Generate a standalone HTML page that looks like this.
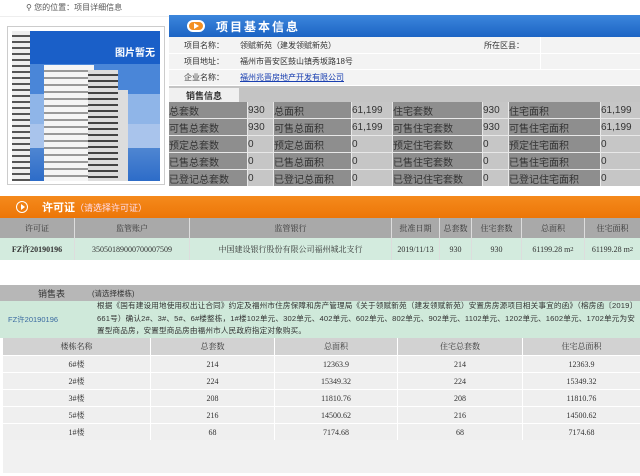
<!DOCTYPE html>
<html><head><meta charset="utf-8"><style>
*{margin:0;padding:0;box-sizing:border-box}
body{width:640px;height:476px;background:#fff;font-family:"Liberation Sans","Noto Sans CJK SC",sans-serif;position:relative;overflow:hidden;color:#333}
.a{position:absolute}
.c{position:absolute;display:flex;align-items:center;white-space:nowrap}
.g>div{display:flex;align-items:center;justify-content:center;white-space:nowrap;color:#333;overflow:hidden}
.s>div{justify-content:flex-start}
</style></head><body>
<div class="c" style="left:26px;top:1px;height:12px;font-size:8px;color:#555">&#9906; 您的位置：项目详细信息</div>
<div class="a" style="left:0;top:16px;width:640px;height:1px;background:#eee"></div>
<div class="a" style="left:7px;top:26px;width:158px;height:159px;border:1px solid #ccc;background:#fff"></div>
<div class="a" style="left:12px;top:31px;width:148px;height:150px;background:linear-gradient(#1a5fc8 0,#1a5fc8 22%,#4a86d8 22%,#4a86d8 42%,#8fb5e8 42%,#8fb5e8 62%,#a9c4ec 62%,#a9c4ec 78%,#4f86d2 78%,#2d6cc8 100%)"></div>
<div class="a" style="left:12px;top:31px;width:18px;height:150px;background:repeating-linear-gradient(#eee 0 4px,#555 4px 6px)"></div>
<div class="a" style="left:44px;top:65px;width:50px;height:116px;background:repeating-linear-gradient(#f5f5f5 0 5px,#999 5px 7px)"></div>
<div class="a" style="left:88px;top:70px;width:30px;height:111px;background:repeating-linear-gradient(#ddd 0 4px,#444 4px 6px)"></div>
<div class="a" style="left:118px;top:90px;width:10px;height:91px;background:#ddd"></div>
<div class="c" style="left:115px;top:44px;font-size:10px;color:#fff;font-weight:bold">图片暂无</div>
<div class="a" style="left:169px;top:15px;width:471px;height:22px;background:linear-gradient(#3c86dc,#1c64c4)"></div>
<div class="a" style="left:187px;top:20px;width:18px;height:12px;border-radius:6px;background:#f39022;border:2px solid #fff"></div>
<div class="a" style="left:194px;top:23px;width:0;height:0;border-left:5px solid #fff;border-top:3px solid transparent;border-bottom:3px solid transparent"></div>
<div class="c" style="left:216px;top:15px;height:22px;font-size:12px;font-weight:bold;color:#fff;letter-spacing:2px">项目基本信息</div>
<div class="a" style="left:169px;top:37px;width:471px;height:48px;background:#f3f3f3"></div>
<div class="a" style="left:169px;top:53px;width:471px;height:1px;background:#fff"></div>
<div class="a" style="left:169px;top:69px;width:471px;height:1px;background:#fff"></div>
<div class="a" style="left:540px;top:37px;width:1px;height:32px;background:#fff"></div>
<div class="c" style="left:184px;top:37px;height:16px;font-size:8px">项目名称：</div>
<div class="c" style="left:240px;top:37px;height:16px;font-size:8px">领赋新苑（建发领赋新苑）</div>
<div class="c" style="left:484px;top:37px;height:16px;font-size:8px">所在区县：</div>
<div class="c" style="left:184px;top:53px;height:16px;font-size:8px">项目地址：</div>
<div class="c" style="left:240px;top:53px;height:16px;font-size:8px">福州市晋安区鼓山镇秀坂路18号</div>
<div class="c" style="left:184px;top:69px;height:16px;font-size:8px">企业名称：</div>
<div class="c" style="left:240px;top:69px;height:16px;font-size:8px;color:#1a3fb0;text-decoration:underline">福州兆晋房地产开发有限公司</div>
<div class="a" style="left:169px;top:86px;width:471px;height:16px;background:#c4c4c4"></div>
<div class="c" style="left:169px;top:88px;width:70px;height:14px;background:#f0f0f0;font-size:9px;font-weight:bold;justify-content:center">销售信息</div>
<div class="a g s" style="left:169px;top:102px;width:471px;height:84px;display:grid;grid-template-columns:78px 25px 77px 40px 89px 25px 91px 39px;grid-template-rows:repeat(5,1fr);gap:1px;background:#e8e8e8;font-size:10px">
<div style="background:#8e8e8e">总套数</div><div style="background:#c6c6c6">930</div><div style="background:#8e8e8e">总面积</div><div style="background:#c6c6c6">61,199</div><div style="background:#8e8e8e">住宅套数</div><div style="background:#c6c6c6">930</div><div style="background:#8e8e8e">住宅面积</div><div style="background:#c6c6c6">61,199</div>
<div style="background:#8e8e8e">可售总套数</div><div style="background:#c6c6c6">930</div><div style="background:#8e8e8e">可售总面积</div><div style="background:#c6c6c6">61,199</div><div style="background:#8e8e8e">可售住宅套数</div><div style="background:#c6c6c6">930</div><div style="background:#8e8e8e">可售住宅面积</div><div style="background:#c6c6c6">61,199</div>
<div style="background:#8e8e8e">预定总套数</div><div style="background:#c6c6c6">0</div><div style="background:#8e8e8e">预定总面积</div><div style="background:#c6c6c6">0</div><div style="background:#8e8e8e">预定住宅套数</div><div style="background:#c6c6c6">0</div><div style="background:#8e8e8e">预定住宅面积</div><div style="background:#c6c6c6">0</div>
<div style="background:#8e8e8e">已售总套数</div><div style="background:#c6c6c6">0</div><div style="background:#8e8e8e">已售总面积</div><div style="background:#c6c6c6">0</div><div style="background:#8e8e8e">已售住宅套数</div><div style="background:#c6c6c6">0</div><div style="background:#8e8e8e">已售住宅面积</div><div style="background:#c6c6c6">0</div>
<div style="background:#8e8e8e">已登记总套数</div><div style="background:#c6c6c6">0</div><div style="background:#8e8e8e">已登记总面积</div><div style="background:#c6c6c6">0</div><div style="background:#8e8e8e">已登记住宅套数</div><div style="background:#c6c6c6">0</div><div style="background:#8e8e8e">已登记住宅面积</div><div style="background:#c6c6c6">0</div>
</div>
<div class="a" style="left:0;top:196px;width:640px;height:22px;background:linear-gradient(#f58a1c,#ec7608)"></div>
<div class="a" style="left:16px;top:201px;width:12px;height:12px;border-radius:6px;border:1.5px solid #fff"></div>
<div class="a" style="left:21px;top:204px;width:0;height:0;border-left:4px solid #fff;border-top:3px solid transparent;border-bottom:3px solid transparent"></div>
<div class="c" style="left:42px;top:196px;height:22px;font-size:11px;font-weight:bold;color:#fff">许可证<span style="font-weight:normal;font-size:9px;color:#fde">（请选择许可证）</span></div>
<div class="a g" style="left:0;top:218px;width:640px;height:42px;display:grid;grid-template-columns:74px 114px 201px 47px 31px 49px 62px 55px;grid-template-rows:20px 22px;gap:0 1px;background:#ddd;font-size:8px;font-family:'Liberation Serif','Noto Serif CJK SC',serif">
<div style="background:#a9a9a9">许可证</div><div style="background:#a9a9a9">监管账户</div><div style="background:#a9a9a9">监管银行</div><div style="background:#a9a9a9">批准日期</div><div style="background:#a9a9a9">总套数</div><div style="background:#a9a9a9">住宅套数</div><div style="background:#a9a9a9">总面积</div><div style="background:#a9a9a9">住宅面积</div>
<div style="background:#d3ebde;font-weight:bold">FZ许20190196</div><div style="background:#d3ebde">35050189000700007509</div><div style="background:#d3ebde">中国建设银行股份有限公司福州城北支行</div><div style="background:#d3ebde">2019/11/13</div><div style="background:#d3ebde">930</div><div style="background:#d3ebde">930</div><div style="background:#d3ebde">61199.28 m<sup>2</sup></div><div style="background:#d3ebde">61199.28 m<sup>2</sup></div>
</div>
<div class="a" style="left:0;top:285px;width:640px;height:16px;background:#b7b7b7"></div>
<div class="c" style="left:38px;top:285px;height:16px;font-size:9px">销售表</div>
<div class="c" style="left:92px;top:285px;height:16px;font-size:7.5px">(请选择楼栋)</div>
<div class="a" style="left:0;top:301px;width:640px;height:37px;background:#cfe9da"></div>
<div class="c" style="left:8px;top:313px;height:12px;font-size:7.5px;color:#3a6aa0">FZ许20190196</div>
<div class="a" style="left:97px;top:300px;width:543px;font-size:7.6px;letter-spacing:0.15px;line-height:12.5px;color:#333">根据《国有建设用地使用权出让合同》约定及福州市住房保障和房产管理局《关于领赋新苑（建发领赋新苑）安置房房源项目相关事宜的函》（榕房函〔2019〕661号）确认2#、3#、5#、6#楼整栋，1#楼102单元、302单元、402单元、602单元、802单元、902单元、1102单元、1202单元、1602单元、1702单元为安置型商品房，安置型商品房由福州市人民政府指定对象购买。</div>
<div class="a" style="left:3px;top:338px;width:637px;height:135px;background:#f1f1f1"></div>
<div class="a g" style="left:3px;top:338px;width:637px;height:102px;display:grid;grid-template-columns:147px 123px 122px 124px 117px;grid-template-rows:17px repeat(5,16px);gap:1px;background:#fff;font-size:8px;font-family:'Liberation Serif','Noto Serif CJK SC',serif">
<div style="background:#d2d2d2">楼栋名称</div><div style="background:#d2d2d2">总套数</div><div style="background:#d2d2d2">总面积</div><div style="background:#d2d2d2">住宅总套数</div><div style="background:#d2d2d2">住宅总面积</div>
<div style="background:#efefef">6#楼</div><div style="background:#efefef">214</div><div style="background:#efefef">12363.9</div><div style="background:#efefef">214</div><div style="background:#efefef">12363.9</div>
<div style="background:#efefef">2#楼</div><div style="background:#efefef">224</div><div style="background:#efefef">15349.32</div><div style="background:#efefef">224</div><div style="background:#efefef">15349.32</div>
<div style="background:#efefef">3#楼</div><div style="background:#efefef">208</div><div style="background:#efefef">11810.76</div><div style="background:#efefef">208</div><div style="background:#efefef">11810.76</div>
<div style="background:#efefef">5#楼</div><div style="background:#efefef">216</div><div style="background:#efefef">14500.62</div><div style="background:#efefef">216</div><div style="background:#efefef">14500.62</div>
<div style="background:#efefef">1#楼</div><div style="background:#efefef">68</div><div style="background:#efefef">7174.68</div><div style="background:#efefef">68</div><div style="background:#efefef">7174.68</div>
</div>
</body></html>
